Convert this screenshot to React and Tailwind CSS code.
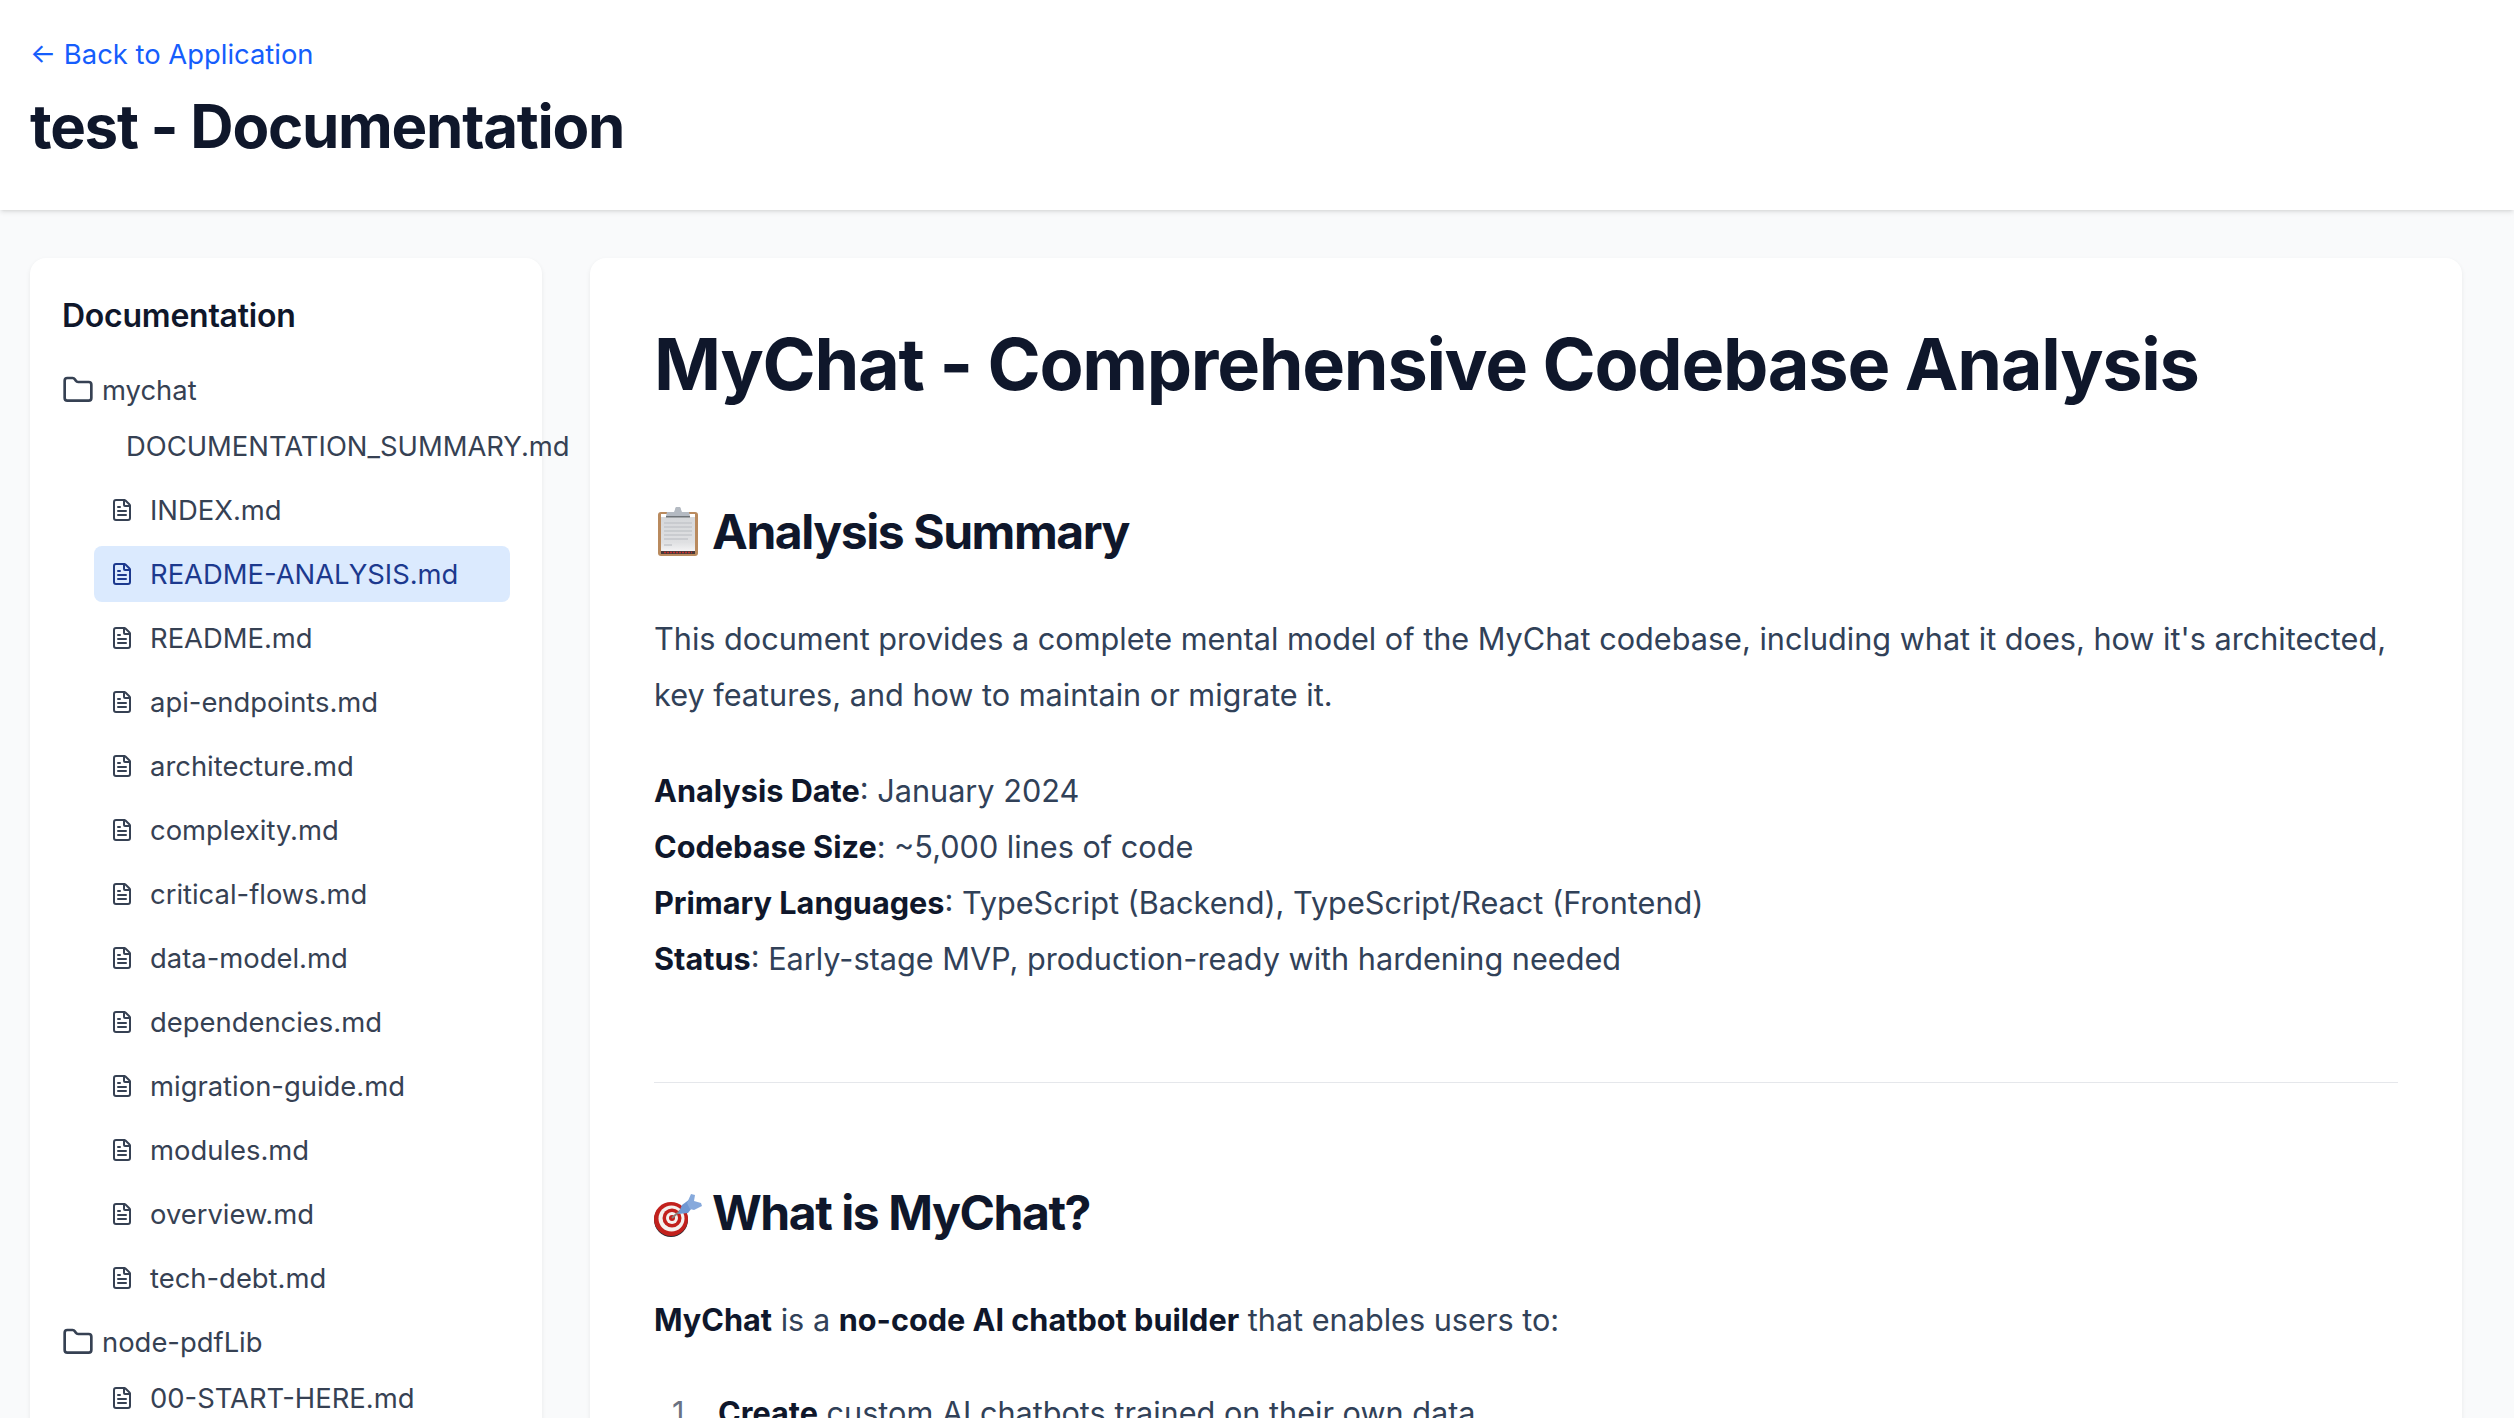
import React from "react";
import { Folder, FileText } from "lucide-react";

const mychatFiles = [
  "DOCUMENTATION_SUMMARY.md",
  "INDEX.md",
  "README-ANALYSIS.md",
  "README.md",
  "api-endpoints.md",
  "architecture.md",
  "complexity.md",
  "critical-flows.md",
  "data-model.md",
  "dependencies.md",
  "migration-guide.md",
  "modules.md",
  "overview.md",
  "tech-debt.md",
];

const FileRow = ({ name, active }) => (
  <div
    className={`flex items-center gap-4 h-14 px-4 rounded-lg ${
      active ? "bg-blue-100 text-blue-900" : "text-gray-700"
    }`}
  >
    <FileText className="w-6 h-6" />
    <span className="whitespace-nowrap pt-[2px]">{name}</span>
  </div>
);

const FolderRow = ({ name }) => (
  <div className="flex items-center gap-2 h-14 text-gray-700">
    <Folder className="w-8 h-8" />
    <span className="pt-[2px]">{name}</span>
  </div>
);

const ClipboardEmoji = () => (
  <svg viewBox="0 0 48 50" className="w-12 h-[50px] shrink-0">
    <defs>
      <linearGradient id="paper" x1="0" y1="0" x2="0" y2="1">
        <stop offset="0" stopColor="#d5d7da" />
        <stop offset="0.75" stopColor="#dfe0e2" />
        <stop offset="1" stopColor="#f3f3f4" />
      </linearGradient>
    </defs>
    <rect x="4" y="5" width="40" height="44" rx="3" fill="#b98a5e" />
    <rect x="7" y="9" width="34" height="35" fill="url(#paper)" />
    <path d="M10 16h28M10 20h28M10 24h28M10 28h28M10 32h24M10 38h8" stroke="#c4c6ca" strokeWidth="1.5" />
    <rect x="7" y="44" width="34" height="3" fill="#4a3a3a" />
    <path d="M10 45.5h28" stroke="#c2312f" strokeWidth="1.5" strokeDasharray="2 1" />
    <rect x="7" y="7" width="34" height="3" fill="#fff" />
    <path d="M12 9l1-4h7l1-2.500a3 3 0 0 1 6 0l1 2.500h7l1 4z" fill="#b4bac2" />
    <path d="M12 9h24v1.500H12z" fill="#6f7479" />
  </svg>
);

const TargetEmoji = () => (
  <svg viewBox="0 0 48 44" className="w-12 h-11 shrink-0 mt-1">
    <circle cx="17" cy="27" r="17" fill="#2d2a33" />
    <circle cx="17" cy="26" r="17" fill="#c2211d" />
    <circle cx="17.500" cy="25.500" r="13" fill="#f5f2ef" />
    <circle cx="18" cy="25" r="9.500" fill="#c2211d" />
    <circle cx="18" cy="25" r="6" fill="#f5f2ef" />
    <circle cx="18" cy="25" r="3" fill="#c2211d" />
    <path d="M18 25L27 17" stroke="#8a7f78" strokeWidth="2" />
    <path d="M24 21l4-9 8-6 5 5-7 9z" fill="#6f97d2" />
    <path d="M33 10l4-9 4 1-1 6 7 2 1 3-8 4-4-1z" fill="#86a9dc" />
  </svg>
);

const Strong = ({ children }) => <strong className="text-slate-900 font-bold">{children}</strong>;

const App = () => {
  return (
    <div className="h-screen overflow-hidden bg-gray-50 text-slate-700 [font-family:Inter,sans-serif]">
      {/* Header */}
      <header className="h-[210px] bg-white shadow-[0_2px_5px_rgba(0,0,0,0.1),0_2px_3px_-2px_rgba(0,0,0,0.1)] px-[30px] pt-[34px]">
        <a className="block text-[27.400px] leading-10 text-blue-600">← Back to Application</a>
        <h1 className="mt-4 text-[60px] leading-[72px] font-bold tracking-[-0.021em] text-slate-900">
          test - Documentation
        </h1>
      </header>

      <div className="flex gap-12 pl-[30px] pr-[52px] pt-12">
        {/* Sidebar */}
        <aside className="w-[512px] shrink-0 bg-white rounded-2xl shadow-[0_2px_5px_rgba(0,0,0,0.07)] p-8 text-[27.400px]">
          <h2 className="mt-[2px] mb-[22px] text-[32px] leading-12 font-semibold tracking-[-0.25px] text-slate-900">
            Documentation
          </h2>
          <FolderRow name="mychat" />
          <div className="flex flex-col gap-2 pl-8">
            {mychatFiles.map((name) => (
              <FileRow key={name} name={name} active={name === "README-ANALYSIS.md"} />
            ))}
          </div>
          <div className="mt-2">
            <FolderRow name="node-pdfLib" />
          </div>
          <div className="flex flex-col gap-2 pl-8">
            <FileRow name="00-START-HERE.md" />
          </div>
        </aside>

        {/* Document */}
        <main className="flex-1 bg-white rounded-2xl shadow-[0_2px_5px_rgba(0,0,0,0.07)] px-16 pt-16 text-[30.650px] leading-[56px]">
          <h1 className="text-[72px] leading-[84px] font-bold tracking-[-0.018em] text-slate-900">
            MyChat - Comprehensive Codebase Analysis
          </h1>
          <h2 className="mt-24 flex items-center gap-[10px] text-[48px] leading-[60px] font-bold tracking-[-0.03em] text-slate-900">
            <ClipboardEmoji />
            Analysis Summary
          </h2>
          <p className="mt-[49px]">
            This document provides a complete mental model of the MyChat codebase, including what it does, how it's
            architected, key features, and how to maintain or migrate it.
          </p>
          <p className="mt-10">
            <Strong>Analysis Date</Strong>: January 2024
            <br />
            <Strong>Codebase Size</Strong>: ~5,000 lines of code
            <br />
            <Strong>Primary Languages</Strong>: TypeScript (Backend), TypeScript/React (Frontend)
            <br />
            <Strong>Status</Strong>: Early-stage MVP, production-ready with hardening needed
          </p>
          <hr className="mt-[95px] border-gray-200" />
          <h2 className="mt-[100px] flex items-center gap-[10px] text-[48px] leading-[60px] font-bold tracking-[-0.03em] text-slate-900">
            <TargetEmoji />
            What is MyChat?
          </h2>
          <p className="mt-[49px]">
            <Strong>MyChat</Strong> is a <Strong>no-code AI chatbot builder</Strong> that enables users to:
          </p>
          <ol className="mt-[37px]">
            <li className="flex">
              <span className="w-16 pl-[18px] text-gray-500">1.</span>
              <span>
                <Strong>Create</Strong> custom AI chatbots trained on their own data
              </span>
            </li>
          </ol>
        </main>
      </div>
    </div>
  );
};

export default App;
